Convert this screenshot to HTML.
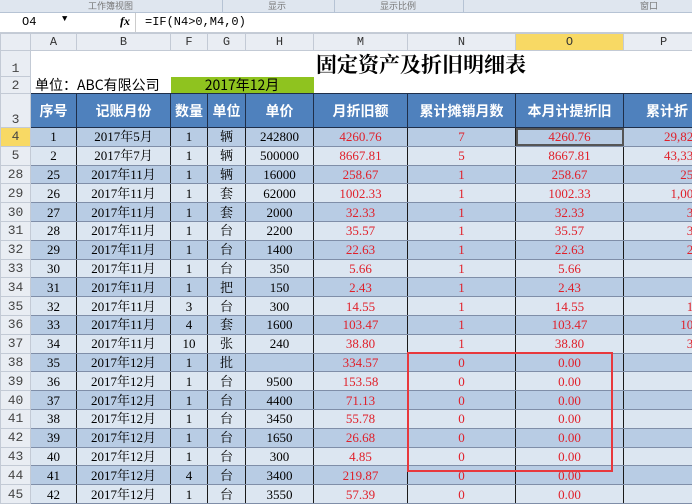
<!DOCTYPE html><html><head><meta charset="utf-8"><style>
body{margin:0;width:692px;height:497px;overflow:hidden;background:#fff;position:relative;font-family:"Liberation Serif","Noto Serif CJK SC",serif;}
.rib{position:absolute;left:0;top:0;width:692px;height:12px;background:#dfe6ef;border-bottom:1px solid #b6c3d4;font:9px/12px "Noto Sans CJK SC",sans-serif;color:#777;}
.fb{position:absolute;left:0;top:13px;width:692px;height:19px;background:#fff;border-bottom:1px solid #c5ccd6;font:12px "Liberation Mono","Noto Sans CJK SC",monospace;}
table{position:absolute;left:0;top:33px;border-collapse:collapse;table-layout:fixed;width:722px;}
td{padding:0;overflow:hidden;white-space:nowrap;text-align:center;font-size:13px;line-height:15px;}
.ch td{height:16px;background:#e9edf3;border:1px solid #c3cad5;font:12px/14px "Liberation Mono",monospace;color:#333;}
td.rh{background:#e9edf3;border:1px solid #c3cad5;font:13px/15px "Liberation Mono",monospace;color:#444;text-align:center;vertical-align:bottom;}
.hd td{background:#4f81bd;color:#fff;font:bold 14px/16px "Noto Sans CJK SC",sans-serif;border:1px solid #1f2f4a;}
.d td{height:17.8px;border:1px solid #1a1a1a;border-top:1px solid #7f8ea8;border-bottom:1px solid #7f8ea8;}
.d td.rh{border:1px solid #c3cad5;vertical-align:middle;}
.a td{background:#b8cce4}.b td{background:#dce6f1}
.a td.rh,.b td.rh{background:#e9edf3}
.r{color:#e0202a}
.p{text-align:right;padding-right:6px}
</style></head><body>
<div class="rib"><span style="position:absolute;left:88px">工作簿视图</span><span style="position:absolute;left:268px">显示</span><span style="position:absolute;left:380px">显示比例</span><span style="position:absolute;left:640px">窗口</span>
<div style="position:absolute;left:222px;top:0;width:1px;height:12px;background:#b6c3d4"></div><div style="position:absolute;left:334px;top:0;width:1px;height:12px;background:#b6c3d4"></div><div style="position:absolute;left:463px;top:0;width:1px;height:12px;background:#b6c3d4"></div></div>
<div class="fb"><span style="position:absolute;left:22px;top:2px">O4</span><span style="position:absolute;left:62px;top:1px;font-size:9px">▼</span><span style="position:absolute;left:120px;top:1px;font-style:italic;font-family:'Liberation Serif';font-weight:bold">fx</span><span style="position:absolute;left:145px;top:2px">=IF(N4&gt;0,M4,0)</span><div style="position:absolute;left:135px;top:0;width:1px;height:19px;background:#ccc"></div></div>
<table>
<colgroup><col style="width:30px"><col style="width:46px"><col style="width:94px"><col style="width:37px"><col style="width:38px"><col style="width:68px"><col style="width:94px"><col style="width:108px"><col style="width:108px"><col style="width:99px"></colgroup>
<tr class="ch"><td></td><td>A</td><td>B</td><td>F</td><td>G</td><td>H</td><td>M</td><td>N</td><td style="background:#f8d964">O</td><td style="text-align:left;padding-left:36px">P</td></tr>
<tr style="height:26px"><td class="rh">1</td><td colspan="9" style="font:bold 21px/24px 'Noto Serif CJK SC',serif;text-align:left;padding-left:285px;vertical-align:middle">固定资产及折旧明细表</td></tr>
<tr style="height:17px"><td class="rh">2</td><td colspan="2" style="text-align:left;font:14px/16px 'Noto Sans CJK SC',sans-serif;padding-left:4px">单位：ABC有限公司</td><td colspan="3" style="background:#8fc31f;font:14px/16px 'Noto Sans CJK SC',sans-serif;text-align:center">2017年12月</td><td colspan="4"></td></tr>
<tr class="hd" style="height:34px"><td class="rh" style="background:#e9edf3;color:#444;font:13px/15px 'Liberation Mono',monospace;font-weight:normal;border-color:#c3cad5">3</td><td>序号</td><td>记账月份</td><td>数量</td><td>单位</td><td>单价</td><td>月折旧额</td><td>累计摊销月数</td><td>本月计提折旧</td><td style="text-align:left;padding-left:22px">累计折</td></tr>
<tr class="d a"><td class="rh" style="background:#f8d964">4</td><td>1</td><td>2017年5月</td><td>1</td><td>辆</td><td>242800</td><td class="r">4260.76</td><td class="r">7</td><td class="r" style="outline:2px solid #555;outline-offset:-2px">4260.76</td><td class="r p">29,825.32</td></tr>
<tr class="d b"><td class="rh">5</td><td>2</td><td>2017年7月</td><td>1</td><td>辆</td><td>500000</td><td class="r">8667.81</td><td class="r">5</td><td class="r">8667.81</td><td class="r p">43,339.05</td></tr>
<tr class="d a"><td class="rh">28</td><td>25</td><td>2017年11月</td><td>1</td><td>辆</td><td>16000</td><td class="r">258.67</td><td class="r">1</td><td class="r">258.67</td><td class="r p">258.67</td></tr>
<tr class="d b"><td class="rh">29</td><td>26</td><td>2017年11月</td><td>1</td><td>套</td><td>62000</td><td class="r">1002.33</td><td class="r">1</td><td class="r">1002.33</td><td class="r p">1,002.33</td></tr>
<tr class="d a"><td class="rh">30</td><td>27</td><td>2017年11月</td><td>1</td><td>套</td><td>2000</td><td class="r">32.33</td><td class="r">1</td><td class="r">32.33</td><td class="r p">32.33</td></tr>
<tr class="d b"><td class="rh">31</td><td>28</td><td>2017年11月</td><td>1</td><td>台</td><td>2200</td><td class="r">35.57</td><td class="r">1</td><td class="r">35.57</td><td class="r p">35.57</td></tr>
<tr class="d a"><td class="rh">32</td><td>29</td><td>2017年11月</td><td>1</td><td>台</td><td>1400</td><td class="r">22.63</td><td class="r">1</td><td class="r">22.63</td><td class="r p">22.63</td></tr>
<tr class="d b"><td class="rh">33</td><td>30</td><td>2017年11月</td><td>1</td><td>台</td><td>350</td><td class="r">5.66</td><td class="r">1</td><td class="r">5.66</td><td class="r p">5.66</td></tr>
<tr class="d a"><td class="rh">34</td><td>31</td><td>2017年11月</td><td>1</td><td>把</td><td>150</td><td class="r">2.43</td><td class="r">1</td><td class="r">2.43</td><td class="r p">2.43</td></tr>
<tr class="d b"><td class="rh">35</td><td>32</td><td>2017年11月</td><td>3</td><td>台</td><td>300</td><td class="r">14.55</td><td class="r">1</td><td class="r">14.55</td><td class="r p">14.55</td></tr>
<tr class="d a"><td class="rh">36</td><td>33</td><td>2017年11月</td><td>4</td><td>套</td><td>1600</td><td class="r">103.47</td><td class="r">1</td><td class="r">103.47</td><td class="r p">103.47</td></tr>
<tr class="d b"><td class="rh">37</td><td>34</td><td>2017年11月</td><td>10</td><td>张</td><td>240</td><td class="r">38.80</td><td class="r">1</td><td class="r">38.80</td><td class="r p">38.80</td></tr>
<tr class="d a"><td class="rh">38</td><td>35</td><td>2017年12月</td><td>1</td><td>批</td><td></td><td class="r">334.57</td><td class="r">0</td><td class="r">0.00</td><td></td></tr>
<tr class="d b"><td class="rh">39</td><td>36</td><td>2017年12月</td><td>1</td><td>台</td><td>9500</td><td class="r">153.58</td><td class="r">0</td><td class="r">0.00</td><td></td></tr>
<tr class="d a"><td class="rh">40</td><td>37</td><td>2017年12月</td><td>1</td><td>台</td><td>4400</td><td class="r">71.13</td><td class="r">0</td><td class="r">0.00</td><td></td></tr>
<tr class="d b"><td class="rh">41</td><td>38</td><td>2017年12月</td><td>1</td><td>台</td><td>3450</td><td class="r">55.78</td><td class="r">0</td><td class="r">0.00</td><td></td></tr>
<tr class="d a"><td class="rh">42</td><td>39</td><td>2017年12月</td><td>1</td><td>台</td><td>1650</td><td class="r">26.68</td><td class="r">0</td><td class="r">0.00</td><td></td></tr>
<tr class="d b"><td class="rh">43</td><td>40</td><td>2017年12月</td><td>1</td><td>台</td><td>300</td><td class="r">4.85</td><td class="r">0</td><td class="r">0.00</td><td></td></tr>
<tr class="d a"><td class="rh">44</td><td>41</td><td>2017年12月</td><td>4</td><td>台</td><td>3400</td><td class="r">219.87</td><td class="r">0</td><td class="r">0.00</td><td></td></tr>
<tr class="d b"><td class="rh">45</td><td>42</td><td>2017年12月</td><td>1</td><td>台</td><td>3550</td><td class="r">57.39</td><td class="r">0</td><td class="r">0.00</td><td></td></tr>
</table>
<div style="position:absolute;left:407px;top:352px;width:202px;height:116px;border:2px solid #e8383d"></div>
</body></html>
